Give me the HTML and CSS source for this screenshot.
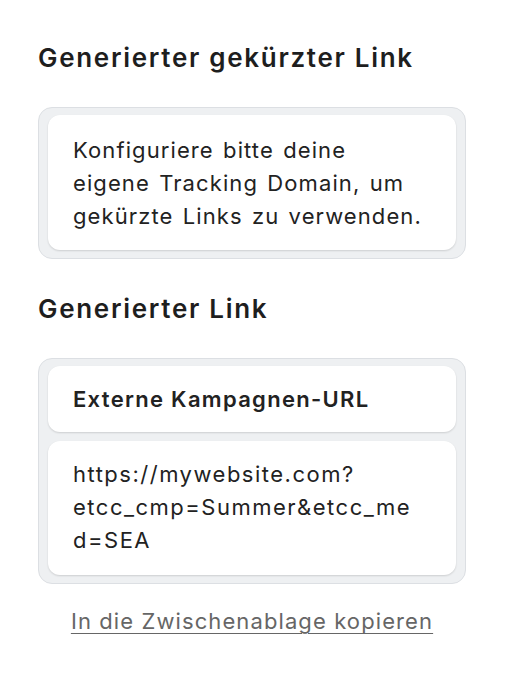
FILE: index.html
```html
<!DOCTYPE html>
<html lang="de">
<head>
<meta charset="utf-8">
<title>Generierter Link</title>
<link rel="stylesheet" href="styles.css">
</head>
<body>
<main class="panel">
  <h2 class="title">Generierter gekürzter Link</h2>
  <div class="group">
    <div class="tile tile-text">Konfiguriere bitte deine eigene Tracking Domain, um gekürzte Links zu verwenden.</div>
  </div>

  <h2 class="title title-second">Generierter Link</h2>
  <div class="group">
    <div class="tile tile-label">Externe Kampagnen-URL</div>
    <div class="tile tile-url">https://mywebsite.com?etcc_cmp=Summer&amp;etcc_me<wbr>d=SEA</div>
  </div>

  <div class="actions">
    <a class="copy" href="#">In die Zwischenablage kopieren</a>
  </div>
</main>
</body>
</html>
```
FILE: styles.css
```css
* { box-sizing: border-box; }

html, body {
  margin: 0;
  padding: 0;
  background: #ffffff;
}

body {
  font-family: Inter, "Noto Sans", "Liberation Sans", sans-serif;
  color: #222222;
}

.panel {
  width: 428px;
  margin-left: 38px;
  padding-top: 42px;
}

.title {
  margin: 0;
  font-size: 26px;
  line-height: 32px;
  font-weight: 600;
  color: #1e1e1e;
  letter-spacing: 1.7px;
}

.title-second {
  margin-top: 34px;
}

.group {
  margin-top: 33px;
  background: #eef0f2;
  border: 1px solid #dcdfe3;
  border-radius: 14px;
  padding: 7px 9px 8px 9px;
  display: flex;
  flex-direction: column;
  gap: 9px;
}

.tile {
  background: #ffffff;
  border-radius: 12px;
  box-shadow: 0 1px 2px rgba(0, 0, 0, 0.14);
  padding: 18px 25px;
  font-size: 22px;
  line-height: 33px;
  letter-spacing: 1.1px;
  color: #222222;
}

.tile-text {
  padding-top: 19px;
  padding-bottom: 17px;
  padding-right: 28px;
  word-spacing: 2px;
}

.tile-label {
  padding-top: 17px;
  padding-bottom: 16px;
  font-weight: 600;
  letter-spacing: 1.3px;
}

.tile-url {
  padding-top: 17px;
  padding-bottom: 18px;
  overflow-wrap: anywhere;
  letter-spacing: 1.5px;
}

.actions {
  margin-top: 21px;
  display: flex;
  justify-content: center;
}

.copy {
  font-size: 22px;
  line-height: 33px;
  letter-spacing: 1.1px;
  color: #666666;
  text-decoration: underline;
  text-underline-offset: 4px;
  text-decoration-thickness: 1px;
}
```
